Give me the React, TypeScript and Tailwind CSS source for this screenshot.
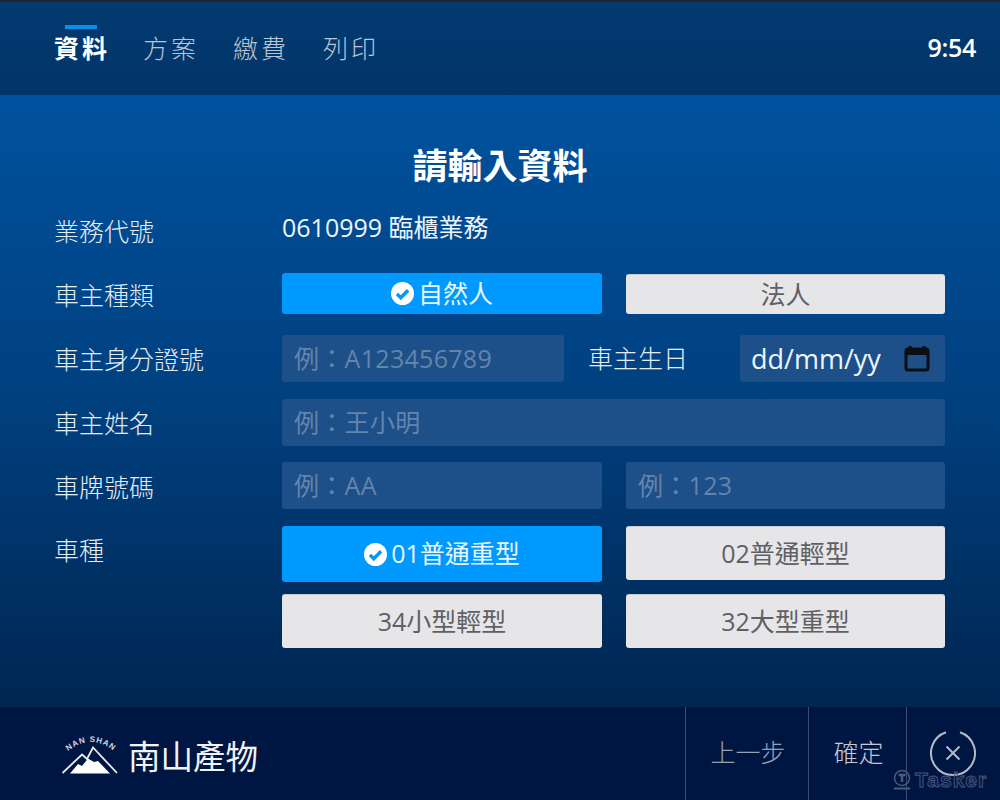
import React from 'react'

const font = { fontFamily: '"Open Sans","Noto Sans CJK TC",sans-serif' }

const CheckBadge = ({ size = 23 }: { size?: number }) => (
  <svg width={size} height={size} viewBox="0 0 24 24" className="shrink-0">
    <circle cx="12" cy="12" r="12" fill="#fff" />
    <path d="M6.2 12.4l4 4 7.6-7.8" fill="none" stroke="#0099ff" strokeWidth="3.6" />
  </svg>
)

const CalendarIcon = () => (
  <svg width="26" height="28" viewBox="0 0 26 28" fill="none">
    <path d="M6 1v4M20 1v4" stroke="#0b0f14" strokeWidth="3" />
    <rect x="2" y="4" width="22" height="21" rx="2" stroke="#0b0f14" strokeWidth="3" />
    <rect x="2" y="4" width="22" height="6" fill="#0b0f14" />
  </svg>
)

const Logo = () => (
  <svg width="56" height="48" viewBox="0 0 56 48" className="shrink-0">
    <defs>
      <path id="arc" d="M5 21 Q29 1 53 21" />
    </defs>
    <text fontSize="8" fontWeight="700" fill="#cfd6e2" letterSpacing="1" fontFamily="Liberation Sans, sans-serif">
      <textPath href="#arc" startOffset="50%" textAnchor="middle">NAN SHAN</textPath>
    </text>
    <path d="M0.500 42 L20 23.500 L25 28 L31 16.500 L55 42" fill="none" stroke="#e8ebf0" strokeWidth="1.800" />
    <path d="M8 42.500 L16 33 L20 35 L26 27.500 L32 31 L36 30 L48 42.500 Z" fill="#fff" />
  </svg>
)

const Label = ({ children, className = '' }: { children: React.ReactNode; className?: string }) => (
  <div className={`w-[227px] shrink-0 -ml-[1px] mr-[1px] text-[25px] leading-none text-[#e4ecf5] font-light ${className}`}>{children}</div>
)

const Field = ({ text, className = '' }: { text: string; className?: string }) => (
  <div className={`flex h-[47px] items-center rounded-[3px] bg-[#1d5089] pl-[12px] text-[25px] font-normal tracking-[0.3px] text-[#6484ab] ${className}`}>
    {text}
  </div>
)

const Choice = ({ text, active, className = '' }: { text: string; active?: boolean; className?: string }) => (
  <div
    className={`flex items-center justify-center rounded-[3px] text-[25px] font-normal ${
      active ? 'bg-[#0099ff] text-[#e9f6ff]' : 'border-t border-[#c9ccd2] bg-[#e6e6e8] text-[#5f6064]'
    } ${className}`}
  >
    {active && <CheckBadge />}
    <span className={active ? 'ml-[4px]' : ''}>{text}</span>
  </div>
)

export default function App() {
  return (
    <div className="relative flex h-[800px] w-[1000px] flex-col overflow-hidden" style={font}>
      <header className="flex h-[95px] shrink-0 items-start justify-between border-t-2 border-[#22262b] bg-gradient-to-b from-[#033a70] to-[#02356a] pl-[54px] pr-[24px]">
        <nav className="flex gap-[34px] pt-[23px] text-[25px] leading-[46px] tracking-[3px] text-[#b9c5d4] font-light">
          <div className="relative -mr-[1px] font-bold text-white">
            <span className="absolute left-[11px] top-[0px] h-[4px] w-[32px] bg-[#0a8fe8]" />
            資料
          </div>
          <div>方案</div>
          <div>繳費</div>
          <div>列印</div>
        </nav>
        <div className="pt-[28px] text-[25px] font-semibold leading-[34px] tracking-[-0.3px] text-white">9:54</div>
      </header>

      <main className="flex flex-1 flex-col bg-gradient-to-b from-[#00529f] via-[#00407f] to-[#002652] pl-[55px] pr-[55px]">
        <h1 className="mt-[50px] h-[41px] text-center text-[35px] font-bold leading-[41px] text-white">請輸入資料</h1>

        <div className="mt-[21px] flex h-[56px] items-start">
          <Label className="pt-[12px]">業務代號</Label>
          <div className="text-[25px] leading-[40px] text-[#eef4fa] font-normal">0610999 臨櫃業務</div>
        </div>

        <div className="mt-[10px] flex h-[41px] items-center">
          <Label className="pt-[3px]">車主種類</Label>
          <Choice text="自然人" active className="h-[41px] w-[320px]" />
          <Choice text="法人" className="ml-[24px] h-[40px] w-[319px] self-end" />
        </div>

        <div className="mt-[21px] flex h-[47px] items-center">
          <Label className="pt-[1px]">車主身分證號</Label>
          <Field text="例：A123456789" className="w-[282px]" />
          <div className="ml-[24px] w-[152px] text-[25px] font-light text-[#e4ecf5]">車主生日</div>
          <div className="flex h-[47px] w-[205px] items-center rounded-[3px] bg-[#1d5089] pl-[11px] pr-[15px]">
            <span className="w-[130px] overflow-hidden whitespace-nowrap pt-[2px] text-[27px] font-normal text-[#eef6fd]">dd/mm/yyyy</span>
            <span className="ml-auto flex"><CalendarIcon /></span>
          </div>
        </div>

        <div className="mt-[17px] flex h-[47px] items-center">
          <Label className="pt-[1px]">車主姓名</Label>
          <Field text="例：王小明" className="w-[663px]" />
        </div>

        <div className="mt-[16px] flex h-[47px] items-center">
          <Label className="pt-[3px]">車牌號碼</Label>
          <Field text="例：AA" className="w-[320px]" />
          <Field text="例：123" className="ml-[24px] w-[319px]" />
        </div>

        <div className="mt-[17px] flex items-start">
          <Label className="pt-[12px]">車種</Label>
          <div className="grid grid-cols-[320px_319px] gap-x-[24px]">
            <Choice text="01普通重型" active className="h-[56px]" />
            <Choice text="02普通輕型" className="h-[54px]" />
            <Choice text="34小型輕型" className="mt-[12px] h-[54px]" />
            <Choice text="32大型重型" className="mt-[12px] h-[54px]" />
          </div>
        </div>
      </main>

      <footer className="flex h-[93px] shrink-0 items-stretch bg-[#001642]">
        <div className="flex flex-1 items-center pl-[62px] pt-[2px]">
          <Logo />
          <span className="ml-[10px] mt-[6px] text-[32.5px] font-normal leading-none text-[#f1f3f6]">南山產物</span>
        </div>
        <div className="flex w-[123px] items-center justify-center border-l border-[#3d4c6c] pb-[2px] pl-[2px] text-[25px] font-light text-[#98a1b2]">上一步</div>
        <div className="flex w-[98px] items-center justify-center border-l border-[#3d4c6c] pb-[2px] pl-[2px] text-[25px] font-light text-[#c4c9d3]">確定</div>
        <div className="flex w-[94px] items-start justify-center border-l border-[#3d4c6c] pt-[22px] pr-[1px]">
          <svg width="48" height="48" viewBox="0 0 48 48" fill="none" stroke="#b4bac6" strokeWidth="2">
            <path d="M31 3.200A22 22 0 1 1 17 3.200" />
            <path d="M17.500 17.500L30.500 30.500M30.500 17.500L17.500 30.500" />
          </svg>
        </div>
      </footer>

      <div className="absolute left-[892px] top-[769px] flex items-center">
        <svg width="20" height="21" viewBox="0 0 20 21" fill="none" stroke="#4a5a78" strokeWidth="1.500">
          <circle cx="10" cy="9" r="7.500" />
          <path d="M6.500 6h7M10 6v7" strokeWidth="2.500" />
          <path d="M2 19.500h16" strokeWidth="2" />
        </svg>
        <span className="ml-[3px] text-[21px] font-bold leading-[21px] tracking-[1px] text-transparent [-webkit-text-stroke:1px_#45557a]" style={{ fontFamily: '"Liberation Sans",sans-serif' }}>Tasker</span>
      </div>
    </div>
  )
}
